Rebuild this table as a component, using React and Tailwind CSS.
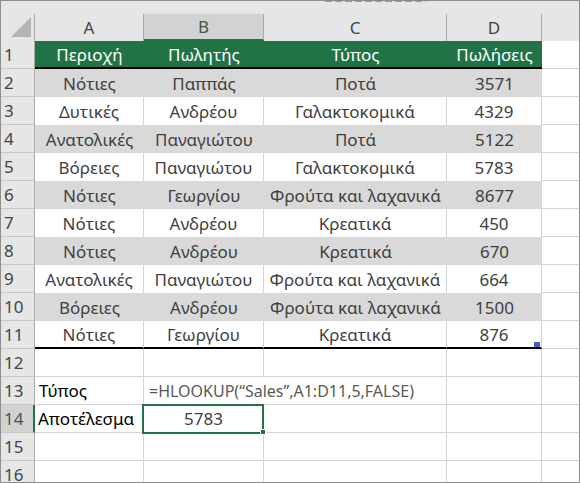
const rows = [
  ["Νότιες", "Παππάς", "Ποτά", "3571"],
  ["Δυτικές", "Ανδρέου", "Γαλακτοκομικά", "4329"],
  ["Ανατολικές", "Παναγιώτου", "Ποτά", "5122"],
  ["Βόρειες", "Παναγιώτου", "Γαλακτοκομικά", "5783"],
  ["Νότιες", "Γεωργίου", "Φρούτα και λαχανικά", "8677"],
  ["Νότιες", "Ανδρέου", "Κρεατικά", "450"],
  ["Νότιες", "Ανδρέου", "Κρεατικά", "670"],
  ["Ανατολικές", "Παναγιώτου", "Φρούτα και λαχανικά", "664"],
  ["Βόρειες", "Ανδρέου", "Φρούτα και λαχανικά", "1500"],
  ["Νότιες", "Γεωργίου", "Κρεατικά", "876"],
];

const grid = "grid grid-cols-[34px_109px_120px_183px_95px_1fr] h-[28px]";

function RowHead({ n, active }) {
  return (
    <div
      className={
        "flex items-center pl-[3px] border-b " +
        (active
          ? "bg-[#d2d2d2] border-b-[#c6c6c6] border-r-2 border-r-[#217346] text-[#3c5a48]"
          : "bg-[#e6e6e6] border-b-[#c6c6c6] border-r border-r-[#ababab] text-[#444]")
      }
    >
      {n}
    </div>
  );
}

function Empty({ last }) {
  return <div className={"border-b border-[#d4d4d4] " + (last ? "" : "border-r")} />;
}

export default function App() {
  return (
    <div className="relative w-[580px] h-[483px] overflow-hidden border border-[#8e8e8e] bg-white font-['Noto_Sans',sans-serif] text-[17px] leading-none">
      {/* dashed part of the top edge */}
      <div className="absolute top-0 left-[321px] w-[104px] h-px bg-[repeating-linear-gradient(90deg,#e6e6e6_0_3px,#9a9a9a_3px_10px)]" />

      <div className="h-[13px] bg-[#e6e6e6]" />

      {/* column letters */}
      <div className="grid grid-cols-[34px_109px_120px_183px_95px_1fr] h-[27px] bg-[#e6e6e6] text-[#444]">
        <div className="relative border-r border-[#ababab]">
          <svg width="34" height="27" className="absolute left-0 top-0">
            <polygon points="30,3 30,23 10,23" fill="#b4b4b4" />
          </svg>
        </div>
        <div className="flex items-center justify-center border-r border-[#ababab]">A</div>
        <div className="flex items-center justify-center bg-[#d2d2d2] border-r border-[#ababab] border-b-2 border-b-[#217346] text-[#3c5a48]">B</div>
        <div className="flex items-center justify-center border-r border-[#ababab]">C</div>
        <div className="flex items-center justify-center border-r border-[#ababab]">D</div>
        <div />
      </div>

      {/* row 1: table header */}
      <div className={grid}>
        <RowHead n={1} />
        {["Περιοχή", "Πωλητής", "Τύπος", "Πωλήσεις"].map((t) => (
          <div key={t} className="flex items-center justify-center whitespace-nowrap bg-[#217346] text-white border-b-2 border-black">
            {t}
          </div>
        ))}
        <Empty last />
      </div>

      {rows.map((r, i) => {
        const n = i + 2;
        const shaded = n % 2 === 0;
        const last = n === 11;
        return (
          <div key={n} className={grid}>
            <RowHead n={n} />
            {r.map((t, j) => (
              <div
                key={j}
                className={
                  "relative flex items-center justify-center whitespace-nowrap text-[#3f3f3f] " +
                  (shaded ? "bg-[#d9d9d9] " : "border-r border-[#d4d4d4] ") +
                  (last ? "border-b-2 border-b-black" : "")
                }
              >
                {t}
                {last && j === 3 && (
                  <div className="absolute right-[1px] bottom-0 w-[6px] h-[5px] bg-[#4b5bc0]" />
                )}
              </div>
            ))}
            <Empty last />
          </div>
        );
      })}

      {/* row 12 */}
      <div className={grid}>
        <RowHead n={12} />
        <Empty />
        <Empty />
        <Empty />
        <Empty />
        <Empty last />
      </div>

      {/* row 13 */}
      <div className={grid}>
        <RowHead n={13} />
        <div className="flex items-center pl-[4px] text-black border-r border-b border-[#d4d4d4]">Τύπος</div>
        <div className="flex items-center pl-[5px] whitespace-nowrap text-[16px] text-[#595959] border-b border-[#d4d4d4]">
          =HLOOKUP(“Sales”,A1:D11,5,FALSE)
        </div>
        <Empty />
        <Empty />
        <Empty last />
      </div>

      {/* row 14 */}
      <div className={grid}>
        <RowHead n={14} active />
        <div className="flex items-center pl-[3px] text-black border-r border-b border-[#d4d4d4]">Αποτέλεσμα</div>
        <div className="relative flex items-center justify-center text-[#3f3f3f] border-r border-b border-[#d4d4d4]">
          5783
          <div className="absolute -left-[2px] -top-[1px] w-[122px] h-[30px] border-2 border-[#217346]" />
          <div className="absolute -right-[3px] -bottom-[3px] w-[6px] h-[6px] bg-[#217346] border border-white" />
        </div>
        <Empty />
        <Empty />
        <Empty last />
      </div>

      {[15, 16].map((n) => (
        <div key={n} className={grid}>
          <RowHead n={n} />
          <Empty />
          <Empty />
          <Empty />
          <Empty />
          <Empty last />
        </div>
      ))}
    </div>
  );
}
